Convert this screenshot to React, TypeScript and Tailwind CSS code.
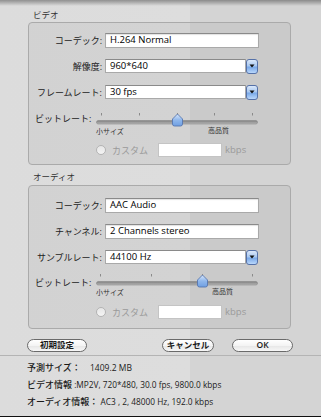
import React from "react";

const FONT = { fontFamily: '"Open Sans", "Noto Sans CJK JP", sans-serif' };

function TextField({ value, width }: { value: string; width: number }) {
  return (
    <div
      className="h-[15px] bg-white border border-[#a9a9a9] border-t-[#8a8a8a] flex items-center pl-[4px] text-[9.5px] text-black leading-none shadow-[inset_0_1px_1px_rgba(0,0,0,0.12)]"
      style={{ width }}
    >
      {value}
    </div>
  );
}

function SelectField({ value }: { value: string }) {
  return (
    <div className="flex items-center w-[153px]">
      <div className="h-[14px] w-[141px] bg-white border border-[#a9a9a9] border-t-[#8a8a8a] flex items-center pl-[4px] text-[9.5px] text-black leading-none">
        {value}
      </div>
      <div className="h-[15px] w-[12px] rounded-[3px] border border-[#5571a8] bg-[linear-gradient(to_bottom,#dbe8fa_0%,#a9c8f0_45%,#7aa9e8_55%,#b9d7fb_100%)] flex items-center justify-center">
        <svg width="6" height="4" viewBox="0 0 6 4">
          <path d="M0.5 0.5 L5.5 0.5 L3 3.5 Z" fill="#111" />
        </svg>
      </div>
    </div>
  );
}

function Row({ label, children }: { label: string; children: React.ReactNode }) {
  return (
    <div className="h-[26px] flex items-center">
      <div className="w-[76px] pr-[3px] text-right text-[9px] text-[#222] leading-none whitespace-nowrap">
        {label}
      </div>
      {children}
    </div>
  );
}

function Slider({
  height,
  trackY,
  ticks,
  thumb,
  highX,
  labelY,
}: {
  height: number;
  trackY: number;
  ticks: number[];
  thumb: number;
  highX: number;
  labelY: number;
}) {
  return (
    <div className="flex" style={{ height }}>
      <div
        className="w-[67px] pl-[6px] text-[9px] text-[#222] leading-none whitespace-nowrap"
        style={{ paddingTop: labelY - 5 }}
      >
        ビットレート:
      </div>
      <div className="relative w-[162px]" style={{ height }}>
        <svg width="162" height={height} className="absolute left-0 top-0">
          <defs>
            <linearGradient id={`tr${thumb}`} x1="0" y1="0" x2="0" y2="1">
              <stop offset="0" stopColor="#7d7d7d" />
              <stop offset="1" stopColor="#b9b9b9" />
            </linearGradient>
            <linearGradient id={`th${thumb}`} x1="0" y1="0" x2="0" y2="1">
              <stop offset="0" stopColor="#dce9fb" />
              <stop offset="0.5" stopColor="#8fb7ec" />
              <stop offset="1" stopColor="#6f9fe2" />
            </linearGradient>
          </defs>
          {ticks.map((t) => (
            <line key={t} x1={t + 0.5} x2={t + 0.5} y1={trackY - 9} y2={trackY - 6.5} stroke="#8a8a8a" strokeWidth="1" />
          ))}
          <rect x="0.5" y={trackY - 1.5} width="161" height="3.5" rx="1.75" fill={`url(#tr${thumb})`} stroke="#8a8a8a" strokeWidth="0.6" />
          <path
            d={`M${thumb + 0.5} ${trackY - 8} L${thumb + 5.5} ${trackY - 3} L${thumb + 5.5} ${trackY + 2} Q${thumb + 5.5} ${trackY + 4} ${thumb + 3.5} ${trackY + 4} L${thumb - 2.5} ${trackY + 4} Q${thumb - 4.5} ${trackY + 4} ${thumb - 4.5} ${trackY + 2} L${thumb - 4.5} ${trackY - 3} Z`}
            fill={`url(#th${thumb})`}
            stroke="#5676b0"
            strokeWidth="0.9"
          />
        </svg>
        <div
          className="absolute left-0 text-[7px] leading-none text-[#333] whitespace-nowrap"
          style={{ top: trackY + 6 }}
        >
          小サイズ
        </div>
        <div
          className="absolute text-[7px] leading-none text-[#333] whitespace-nowrap"
          style={{ top: trackY + 5, left: highX }}
        >
          高品質
        </div>
      </div>
    </div>
  );
}

function CustomRow({ height }: { height: number }) {
  return (
    <div className="flex items-center" style={{ height }}>
      <div className="ml-[67px] w-[10px] h-[10px] rounded-full border border-[#b4b4b4] bg-[linear-gradient(to_bottom,#e6e6e6,#f4f4f4)]" />
      <div className="ml-[6px] text-[9px] text-[#9a9a9a] leading-none whitespace-nowrap">カスタム</div>
      <div className="ml-[10px] w-[64px] h-[14px] bg-white border border-[#c4c4c4]" />
      <div className="ml-[3px] text-[9.5px] text-[#9a9a9a] leading-none">kbps</div>
    </div>
  );
}

function Button({ label, width }: { label: string; width: number }) {
  return (
    <div
      className="h-[13px] rounded-full border border-[#6a6a6a] bg-[linear-gradient(to_bottom,#ffffff_0%,#f4f4f4_50%,#e6e6e6_51%,#f7f7f7_100%)] flex items-center justify-center text-[8.5px] font-semibold text-[#1a1a1a] leading-none"
      style={{ width }}
    >
      {label}
    </div>
  );
}

export default function App() {
  return (
    <div
      className="relative w-[321px] h-[417px] overflow-hidden flex flex-col bg-[linear-gradient(to_right,#dcdcdc_0px,#dddddd_190px,#d4d4d4_190px,#d4d4d4_100%)]"
      style={FONT}
    >
      <div className="absolute left-0 top-0 w-full h-[6px] bg-[linear-gradient(to_bottom,rgba(0,0,0,0.35),rgba(0,0,0,0))]" />

      <div className="h-[22px] pt-[9px] pl-[33px] text-[8.5px] leading-[12px] text-[#333]">ビデオ</div>
      <div className="ml-[28px] w-[263px] border border-[#aaaaaa] rounded-[4px] bg-black/[0.045] pt-[4px] pb-[3px]">
        <Row label="コーデック:">
          <TextField value="H.264 Normal" width={154} />
        </Row>
        <Row label="解像度:">
          <SelectField value="960*640" />
        </Row>
        <Row label="フレームレート:">
          <SelectField value="30 fps" />
        </Row>
        <Slider height={34} trackY={17} ticks={[5, 43, 81, 118, 156]} thumb={81} highX={112} labelY={14} />
        <CustomRow height={22} />
      </div>

      <div className="h-[20px] pt-[6px] pl-[33px] text-[8.5px] leading-[12px] text-[#333]">オーディオ</div>
      <div className="ml-[28px] w-[263px] border border-[#aaaaaa] rounded-[4px] bg-black/[0.045] pt-[6px] pb-[6px]">
        <Row label="コーデック:">
          <TextField value="AAC Audio" width={154} />
        </Row>
        <Row label="チャンネル:">
          <TextField value="2 Channels stereo" width={154} />
        </Row>
        <Row label="サンプルレート:">
          <SelectField value="44100 Hz" />
        </Row>
        <Slider height={32} trackY={13} ticks={[4, 55, 106, 156]} thumb={106} highX={116} labelY={13} />
        <CustomRow height={20} />
      </div>

      <div className="h-[27px] pt-[10px] flex items-start border-b border-[#b4b4b4]">
        <div className="ml-[27px]">
          <Button label="初期設定" width={60} />
        </div>
        <div className="ml-[75px]">
          <Button label="キャンセル" width={52} />
        </div>
        <div className="ml-[18px]">
          <Button label="OK" width={61} />
        </div>
      </div>

      <div className="pt-[3px] pl-[27px] text-[9px] leading-[17px] text-[#1a1a1a] font-medium whitespace-nowrap">
        <div className="flex items-baseline">
          <span className="w-[63px]">予測サイズ：</span>
          <span className="text-[8.5px]">1409.2 MB</span>
        </div>
        <div className="flex items-baseline">
          <span>ビデオ情報</span>
          <span className="text-[8.3px]">&nbsp;:MP2V, 720*480, 30.0 fps, 9800.0 kbps</span>
        </div>
        <div className="flex items-baseline">
          <span>オーディオ情報：</span>
          <span className="text-[8.3px]">&nbsp;AC3 , 2, 48000 Hz, 192.0 kbps</span>
        </div>
      </div>

      <div className="mt-auto h-px bg-[#111]" />
    </div>
  );
}
